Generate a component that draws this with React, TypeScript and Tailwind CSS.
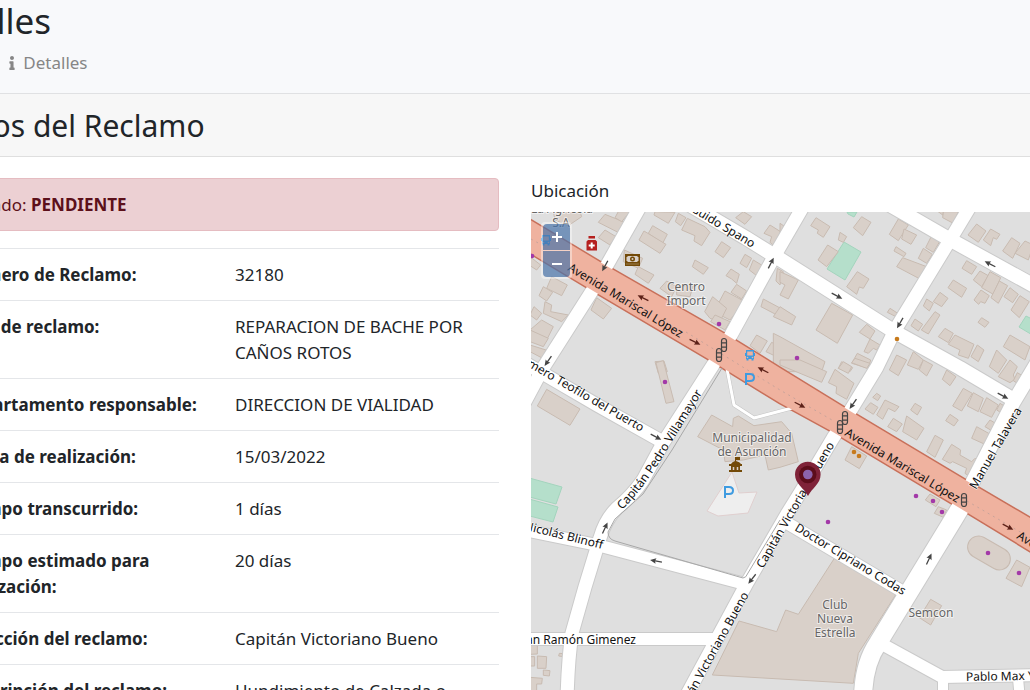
import { FaInfo } from 'react-icons/fa'

// --- DATOS DEL RECLAMO ---
const rows: { label: string; value: string }[] = [
  { label: 'Número de Reclamo:', value: '32180' },
  { label: 'Tipo de reclamo:', value: 'REPARACION DE BACHE POR CAÑOS ROTOS' },
  { label: 'Departamento responsable:', value: 'DIRECCION DE VIALIDAD' },
  { label: 'Fecha de realización:', value: '15/03/2022' },
  { label: 'Tiempo transcurrido:', value: '1 días' },
  { label: 'Tiempo estimado para realización:', value: '20 días' },
  { label: 'Dirección del reclamo:', value: 'Capitán Victoriano Bueno' },
  { label: 'Descripción del reclamo:', value: 'Hundimiento de Calzada o' },
]

// --- CALLES ---
const streets: { d: string; w: number }[] = [
  { d: 'M690 205 L746 238 L775 256 L895 332 L960 368 L1014 400', w: 15 },
  { d: 'M804 205 L775 255 L731 335 L713 365 L663 443 L643 480 Q632 496 617 508 Q605 520 600 538 L585 587 L572 633 Q568 660 567 700', w: 14 },
  { d: 'M971 205 L950 240 L895 330 L877 367 L852 408 L833 438 L808 480 L787 514 L747 583 L684 700', w: 14 },
  { d: 'M890 205 L949 239 L1040 289', w: 15 },
  { d: 'M1040 358 L1013 403 L965 497', w: 15 },
  { d: 'M962 505 L953 520 L878 643 Q863 665 863 700', w: 19 },
  { d: 'M520 360 L597 405 L663 442', w: 14 },
  { d: 'M641 205 L607 265 L592 291 L543 368 L520 411', w: 14 },
  { d: 'M520 529 L597 545 L745 584', w: 13 },
  { d: 'M520 639 H718', w: 13 },
  { d: 'M787 523 L900 590', w: 13 },
  { d: 'M880 643 L942 677 L1040 675', w: 13 },
  { d: 'M943 678 V700 M1018 678 L1020 700', w: 11 },
]

const avenue =
  'M520 214 L610 268 L725 334 L780 368 L850 411 L967 481 L1040 524 L1040 557 L953 504 L833 432 L780 403 L710 360 L595 292 L520 247 Z'

// --- EDIFICIOS: cada tesela usa su propia escala (3 unidades = 1px) ---
const tiles: { x: number; y: number; shapes: string[] }[] = [
  {
    x: 530, y: 205,
    shapes: [
      '70,20 150,20 155,35 115,62 75,45', '225,28 285,52 270,85 205,52', '265,20 300,20 275,50 255,38',
      '225,75 258,95 240,120 205,98', '375,20 435,22 415,55 372,30', '368,62 412,88 398,115 355,85',
      '342,78 408,118 390,145 327,105', '445,25 468,38 452,62 436,50', '472,40 525,65 540,82 515,122 492,108 495,92 455,75',
      '575,110 602,128 580,158 555,140', '495,165 535,188 520,208 487,185', '645,148 665,160 650,188 630,175',
      '670,165 698,182 680,212 658,195', '603,192 628,208 620,235 605,222 588,212', '620,238 650,258 635,282 603,262',
      '585,258 645,290 620,320 600,345 570,330 560,305', '548,275 590,310 570,350 540,340 524,320', '555,330 600,350 585,375 542,350',
      '700,282 780,325 775,348 693,305', '640,20 665,35 645,58 617,38', '720,60 755,82 735,125 720,112 725,95 702,85',
      '680,390 712,408 690,445 660,422', '725,412 760,430 750,460 708,440', '283,135 338,160 325,190 280,170', '325,185 372,210 355,235 315,208',
      '410,228 440,245 425,275 390,250', '440,245 490,240 480,275 440,270', '200,278 245,310 220,342 183,315',
      '65,215 112,240 95,272 50,250', '40,245 68,262 50,288 27,272', '0,155 32,180 20,195 0,182', '45,290 65,300 62,320 115,330 95,350 40,325',
      '12,305 35,325 20,345 0,330', '35,345 70,365 50,405 0,375', '0,375 55,400 40,425 0,410', '0,420 48,435 38,460 0,440',
      '375,470 402,468 412,500 385,505', '742,190 760,200 750,240 738,228',
    ],
  },
  {
    x: 780, y: 205,
    shapes: [
      '108,38 150,65 130,97 112,85 115,75 92,62', '245,35 273,52 248,92 220,68', '180,82 200,95 190,112 175,105',
      '143,120 175,140 140,185 114,165', '232,200 267,222 250,250 238,246 230,268 200,245', '0,55 15,65 0,95',
      '0,200 55,225 25,282 0,270 15,240 0,232', '355,42 385,60 355,107 328,88', '372,72 410,90 393,118 365,102',
      '348,125 378,145 372,155 342,138', '455,92 480,108 460,142 437,128', '430,130 457,148 440,175 415,160',
      '368,158 440,185 420,222 350,185', '490,20 535,20 520,55 488,38', '472,18 490,18 488,30', '590,57 618,78 595,112 564,90',
      '632,72 660,88 650,103 640,98 632,122 610,105', '695,98 720,115 698,160 668,138', '735,108 760,120 745,165 705,145',
      '560,167 590,185 575,208 546,190', '600,198 625,212 605,245 580,225', '630,200 662,218 640,268 605,248',
      '658,228 683,242 655,295 633,278', '690,248 715,268 698,293 672,275', '720,272 748,290 718,338 693,315',
      '603,255 628,272 615,295 602,290 596,298 582,285', '520,225 560,250 545,277 504,248', '480,262 504,280 485,305 460,290',
      '440,282 460,295 448,318 430,303', '330,310 358,328 350,336 322,322', '465,320 480,330 445,387 424,375',
      '405,342 428,358 415,378 393,362', '605,338 627,352 615,367 594,352', '495,370 520,385 505,413 475,395',
      '525,390 582,418 565,460 535,450 540,435 505,418', '592,420 612,435 595,470 573,455', '690,390 750,425 735,465 670,425',
      '155,295 218,330 172,415 108,375', '260,358 285,378 270,402 238,382', '270,402 300,420 290,435 280,430 265,445 252,440',
      '0,305 47,335 35,360 -20,335', '232,445 272,465 265,490 215,475', '185,470 218,488 210,500 175,490',
      '-20,385 0,395 135,470 125,500 -20,500',
    ],
  },
  {
    x: 530, y: 360,
    shapes: [
      '378,8 400,2 432,125 408,130', '50,88 150,147 120,196 22,138',
      '545,165 608,200 610,175 625,168 672,197 755,185 785,220 805,305 750,322 715,330 705,285 640,300 585,305 580,270 503,230',
    ],
  },
  {
    x: 780, y: 360,
    shapes: [
      '0,0 60,0 140,35 125,67 0,15', '190,5 215,20 205,40 175,25', '165,28 222,70 200,118 168,100 170,80 145,68',
      '350,-15 380,0 355,47 328,30', '400,-25 430,0 415,28 382,15', '430,0 458,15 440,48 418,30', '500,30 528,50 510,77 487,58',
      '650,-30 680,0 655,40 628,20', '690,0 712,20 700,45 705,58 690,68 655,50', '712,38 732,50 720,75 700,62',
      '225,-5 270,10 260,25 215,8', '290,100 302,108 293,122 278,112', '272,128 294,142 280,163 255,147',
      '315,120 357,140 345,155 325,145 308,178 290,165', '405,130 425,142 412,165 392,150', '340,175 367,192 350,215 323,200',
      '380,168 432,205 410,240 368,215', '550,85 577,100 545,153 518,138', '580,98 610,115 595,155 562,138', '620,113 655,135 635,172 600,155',
      '660,130 685,145 675,165 650,150', '510,163 535,180 522,198 497,182', '630,180 655,195 640,215 615,200',
      '590,200 635,225 615,253 575,235', '465,226 490,240 465,292 440,275', '515,253 542,270 540,285 575,305 585,295 600,300 570,350 555,340 560,325 518,305 510,310 487,298',
      '215,260 260,288 238,326 195,300', '450,402 480,420 468,440 436,420', '475,440 500,450 490,472 463,460',
    ],
  },
  {
    x: 530, y: 520,
    shapes: [
      '0,375 22,377 22,402 0,403', '22,408 50,410 48,445 22,445', '0,410 14,410 14,438 0,438', '40,450 60,452 58,468 40,466',
      '88,400 102,401 100,410 86,408', '0,472 37,475 35,492 20,492 20,512 0,512',
    ],
  },
  {
    x: 780, y: 520,
    shapes: [
      '165,112 350,220 235,400 220,490 -203,465 -123,303 -10,335 17,270 55,283',
      '710,120 750,142 725,200 678,175', '452,238 485,257 452,315 418,293',
    ],
  },
]

const greens = [
  'M844 242 L861 252 L845 280 L827 269 Z', 'M847 212 H857 L854 217 L848 214 Z', 'M1026 316 L1040 323 L1034 336 L1019 327 Z',
  'M522 476 L562 487 L556 504 L522 495 Z', 'M522 497 L558 507 L553 522 L522 514 Z',
]

const dots: [number, number, string][] = [
  [532, 256, '#a339a8'], [719, 324, '#a339a8'], [797, 358, '#a339a8'], [665, 382, '#a339a8'], [828, 522, '#a339a8'],
  [916, 496, '#a339a8'], [933, 501, '#a339a8'], [942, 512, '#a339a8'], [988, 553, '#a339a8'], [1019, 573, '#a339a8'],
  [897, 339, '#c77a1c'], [854, 452, '#c77a1c'], [859, 456, '#c77a1c'],
]

// x, y, ángulo, color
const arrows: [number, number, number, string][] = [
  [605, 266, 118, '#444'], [643, 298, 206, '#5c2118'], [695, 342, 26, '#5c2118'], [771, 263, -63, '#444'], [548, 361, 125, '#444'],
  [837, 296, 28, '#444'], [900, 323, 120, '#444'], [990, 264, 207, '#444'], [656, 437, 28, '#444'], [763, 370, 207, '#5c2118'],
  [800, 405, 27, '#5c2118'], [853, 404, 125, '#444'], [1003, 396, 28, '#444'], [605, 528, -65, '#444'], [656, 561, 190, '#444'],
  [752, 579, 128, '#444'], [929, 559, -65, '#444'], [1008, 527, 28, '#5c2118'],
]

const signals: [number, number][] = [[724, 345], [719, 355], [845, 418], [840, 427], [964, 500]]

type Anchor = 'start' | 'end'
const streetNames: { text: string; x: number; y: number; angle: number; anchor: Anchor }[] = [
  { text: 'Avenida Mariscal López', x: 567, y: 270, angle: 31, anchor: 'start' },
  { text: 'Avenida Mariscal López', x: 844, y: 435, angle: 31, anchor: 'start' },
  { text: 'Avenida Mariscal López', x: 1016, y: 538, angle: 31, anchor: 'start' },
  { text: 'Guido Spano', x: 752, y: 248, angle: 31, anchor: 'end' },
  { text: 'Romero Teofilo del Puerto', x: 641, y: 432, angle: 30, anchor: 'end' },
  { text: 'Manuel Talavera', x: 976, y: 490, angle: -60, anchor: 'start' },
  { text: 'Capitán Victoriano Bueno', x: 763, y: 569, angle: -60, anchor: 'start' },
  { text: 'Capitán Victoriano Bueno', x: 749, y: 595, angle: -61, anchor: 'end' },
  { text: 'Doctor Cipriano Codas', x: 794, y: 530, angle: 31, anchor: 'start' },
  { text: 'Nicolás Blinoff', x: 602, y: 549, angle: 14, anchor: 'end' },
  { text: 'Juan Ramón Gimenez', x: 636, y: 644, angle: 0, anchor: 'end' },
  { text: 'Pablo Max Ynsfran', x: 966, y: 681, angle: -1, anchor: 'start' },
]

const places: [string, number, number][] = [
  ['La Agrícola', 562, 213], ['S.A', 561, 227], ['Centro', 686, 291], ['Import', 686, 305],
  ['Municipalidad', 752, 442], ['de Asunción', 752, 456], ['Club', 835, 609], ['Nueva', 835, 623],
  ['Estrella', 835, 637], ['Semcon', 931, 617],
]

const Bus = ({ x, y }: { x: number; y: number }) => (
  <g transform={`translate(${x} ${y})`}>
    <path d="M-4 -5 H4 V-2 H5 V1 H4 V4 H3.500 V5.500 H1.500 V4 H-1.500 V5.500 H-3.500 V4 H-4 V1 H-5 V-2 H-4 Z" fill="#3f9be0" />
    <path d="M-2.800 -3.500 H2.800 V0.500 H-2.800 Z" fill="#efb29f" />
    <circle cx="-2.500" cy="2.500" r="0.8" fill="#efb29f" />
    <circle cx="2.500" cy="2.500" r="0.8" fill="#efb29f" />
  </g>
)

const MapDrawing = () => (
  <svg className="block h-full w-full bg-[#dfdfdf]" role="img" aria-label="Mapa de la ubicación">
    <g transform="translate(-531 -212)">
      {greens.map(d => <path key={d} d={d} fill="#b5dfcb" stroke="#a3d4bd" strokeWidth="1" />)}
      {tiles.map((tile, i) => (
        <g key={i} transform={`translate(${tile.x} ${tile.y}) scale(0.3333)`} fill="#d9d0c9" stroke="#c8bbb1" strokeWidth="3">
          {tile.shapes.map(points => <polygon key={points} points={points} />)}
        </g>
      ))}
      <rect x="-23" y="-11" width="46" height="22" rx="11" transform="translate(989 553) rotate(30)" fill="#d9d0c9" stroke="#c8bbb1" />
      <path d="M732 472 L739 493 L757 492 L748 513 L718 516 L707 511 Z" fill="#eeeeee" stroke="#e0cfcf" />

      <g fill="none" strokeLinejoin="round">
        <path d="M727 369 L734 405 L754 418 L792 408" stroke="#c4c4c4" strokeWidth="4" />
        {streets.map(s => <path key={s.d} d={s.d} stroke="#cacaca" strokeWidth={s.w + 1} />)}
        <path d={avenue} stroke="#c8705a" strokeWidth="3" />
        {streets.map(s => <path key={s.d} d={s.d} stroke="#fff" strokeWidth={s.w - 1} />)}
        <path d="M727 369 L734 405 L754 418 L792 408" stroke="#fff" strokeWidth="3" />
        <path d="M722 368 L672 450 L643 494 L615 519 L608 532 Q608 539 615 541 L743 578 Q746 578 748 573 L780 520" stroke="#a8a8a8" />
      </g>
      <path d={avenue} fill="#efb29f" />
      <path d="M531 239 L540 244 M686 332 L780 390 L832 420 M967 501 L1034 540" fill="none" stroke="#c9a39a" strokeDasharray="2 4" />

      {arrows.map(([x, y, angle, color]) => (
        <g key={`${x}-${y}`} transform={`translate(${x} ${y}) rotate(${angle})`}>
          <path d="M-6 0 H2" stroke={color} strokeWidth="1.300" />
          <path d="M6 0 L0 -2.800 L1 0 L0 2.800 Z" fill={color} />
        </g>
      ))}
      {signals.map(([x, y]) => (
        <g key={`${x}-${y}`} transform={`translate(${x} ${y})`} fill="#e3ac9b" stroke="#444" strokeWidth="1.200">
          <rect x="-2.500" y="-6.500" width="5" height="13" rx="2.500" />
          <path d="M-2.500 -2.200 H2.500 M-2.500 2.200 H2.500" />
        </g>
      ))}
      {dots.map(([x, y, color]) => <circle key={`${x}-${y}`} cx={x} cy={y} r="2.300" fill={color} />)}

      {/* puntos de interés */}
      <Bus x={546} y={240} />
      <Bus x={750} y={355} />
      <path d="M588.500 236 H595 V238.500 H588.500 Z M588 240 H595.500 L597 241.500 V250.500 H586.500 V241.500 Z" fill="#b5201f" />
      <path d="M591.700 242.500 V248.500 M588.700 245.500 H594.700" stroke="#fff" strokeWidth="2" />
      <path d="M625 254 H640 V266 H625 Z" fill="#734a08" />
      <path d="M628 256 H637 L638.500 257.500 V260.500 L637 262 H628 L626.500 260.500 V257.500 Z" fill="#d9d0c9" />
      <circle cx="632.500" cy="259" r="2.500" fill="#734a08" />
      <circle cx="632.500" cy="259" r="1" fill="#d9d0c9" />
      <path d="M626 264 H639" stroke="#9b7c4b" />
      <path d="M735 457 H740 V460 H736 V461 Q740 462 741 464 H742 V466 H729 V464 H731 Q732 462 735 461 Z M731 466 H740 V470 H742 V472 H729 V470 H731 Z" fill="#734a08" />
      <path d="M733.500 467 V470 M737.500 467 V470" stroke="#d9d0c9" strokeWidth="1.500" />
      <g fill="none" stroke="#3f9be0" strokeWidth="2">
        <path d="M746 385 V374 H750 Q754 374 754 377.500 Q754 381 750 381 H746" />
        <path d="M725 498 V487 H729 Q733 487 733 490.500 Q733 494 729 494 H725" />
      </g>

      <g className="font-['Noto_Sans',sans-serif] text-[12px]" strokeLinejoin="round" paintOrder="stroke">
        {places.map(([text, x, y]) => (
          <text key={text} x={x} y={y} textAnchor="middle" fill="#666" stroke="#ffffff99" strokeWidth="2">{text}</text>
        ))}
        {streetNames.map(({ text, x, y, angle, anchor }) => (
          <text
            key={`${x}-${y}`}
            transform={`translate(${x} ${y}) rotate(${angle})`}
            textAnchor={anchor}
            fill="#111"
            stroke={text.startsWith('Avenida') ? '#efb29f' : '#fff'}
            strokeWidth="1"
          >
            {text}
          </text>
        ))}
        <path id="villamayor" d="M622 510 Q645 487 667 450 L719 366" fill="none" />
        <text fill="#111" stroke="#fff" strokeWidth="1">
          <textPath href="#villamayor">Capitán Pedro Villamayor</textPath>
        </text>
      </g>

      {/* marcador */}
      <path d="M808 496 C804 488 795 484 795 474.500 A12.800 12.800 0 0 1 820.600 474.500 C820.600 484 812 488 808 496 Z" fill="#7f2238" />
      <circle cx="807.800" cy="474.500" r="8.700" fill="#5c0d1b" />
      <circle cx="807.800" cy="474.500" r="4.800" fill="#8c63ac" />
    </g>
  </svg>
)

const zoomButton =
  'flex h-[26px] w-[27px] items-center justify-center bg-[#003c88]/50 text-white'

const LocationMap = () => (
  <div className="relative h-[600px] overflow-hidden">
    <MapDrawing />
    <div className="absolute top-[10px] left-[10px] flex flex-col gap-px rounded bg-white/40 p-[2px]">
      <button type="button" aria-label="Acercar" className={`${zoomButton} rounded-t-sm`}>
        <svg width="10" height="10" stroke="currentColor" strokeWidth="2"><path d="M5 0 V10 M0 5 H10" /></svg>
      </button>
      <button type="button" aria-label="Alejar" className={`${zoomButton} rounded-b-sm`}>
        <svg width="10" height="10" stroke="currentColor" strokeWidth="2"><path d="M0 5 H10" /></svg>
      </button>
    </div>
  </div>
)

export default function App() {
  return (
    <div className="h-screen overflow-hidden bg-white font-['Noto_Sans',sans-serif] text-[17px] leading-[26px] text-[#212529]">
      <div className="-mx-[47px]">
        <header className="border-b border-[#e0e1e3] bg-[#f8f9fb] pb-[17px]">
          <h1 className="-ml-[34px] text-[35px] leading-[42px]">Detalles</h1>
          <nav aria-label="Ruta" className="mt-2 flex items-center pl-10 text-[#868686]">
            <span className="mr-[6px]">/</span>
            <FaInfo className="mr-1 text-[14px]" />
            <span>Detalles</span>
          </nav>
        </header>

        <section>
          <div className="border-b border-[#dfdfdf] bg-[#f7f7f7] pt-[14px] pb-3">
            <h2 className="-ml-[10px] text-[30px] leading-9">Datos del Reclamo</h2>
          </div>

          <div className="grid grid-cols-2 gap-8 pt-[21px]">
            <div>
              <div role="alert" className="mb-[17px] rounded border border-[#e5bcc1] bg-[#ecd0d3] px-[14px] pt-[13px] pb-3 text-[#5c101a]">
                Estado: <strong>PENDIENTE</strong>
              </div>
              <table className="w-full table-fixed border-collapse">
                <tbody>
                  {rows.map(row => (
                    <tr key={row.label} className="border-t border-[#e4e6e9] align-top">
                      <th scope="row" className="w-[269px] py-[13px] pr-[13px] pb-3 pl-[7px] text-left font-bold">{row.label}</th>
                      <td className="px-[13px] pt-[13px] pb-3">{row.value}</td>
                    </tr>
                  ))}
                </tbody>
              </table>
            </div>

            <div>
              <p className="mb-2">Ubicación</p>
              <LocationMap />
            </div>
          </div>
        </section>
      </div>
    </div>
  )
}
